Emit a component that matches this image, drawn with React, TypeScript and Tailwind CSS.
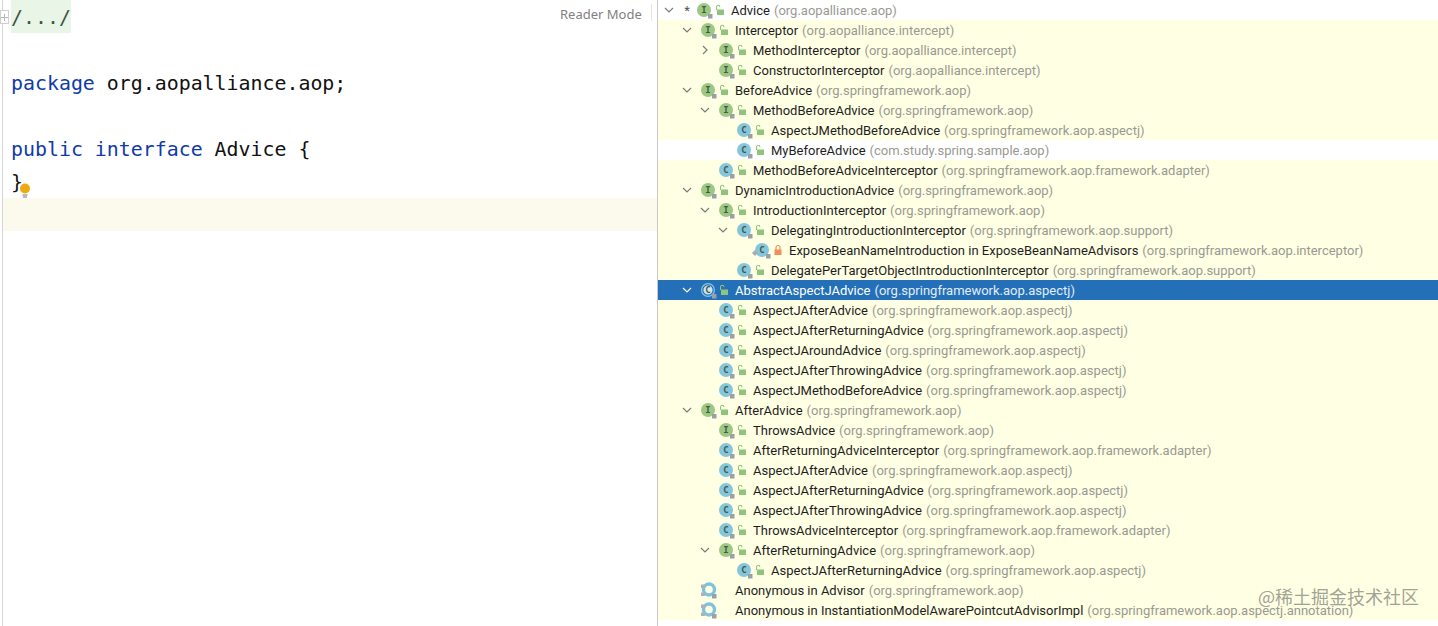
type Kind = "I" | "C" | "A" | "N";

type Row = {
  depth: number;
  name: string;
  pkg?: string;
  kind: Kind;
  arrow?: "down" | "right";
  lock?: "open" | "private" | "none";
  white?: boolean;
  selected?: boolean;
  star?: boolean;
  pin?: boolean;
};

const SPRING_AOP = "(org.springframework.aop)";
const ASPECTJ = "(org.springframework.aop.aspectj)";
const ADAPTER = "(org.springframework.aop.framework.adapter)";
const INTERCEPT = "(org.aopalliance.intercept)";

const rows: Row[] = [
  { depth: 0, name: "Advice", pkg: "(org.aopalliance.aop)", kind: "I", arrow: "down", star: true, white: true },
  { depth: 1, name: "Interceptor", pkg: INTERCEPT, kind: "I", arrow: "down" },
  { depth: 2, name: "MethodInterceptor", pkg: INTERCEPT, kind: "I", arrow: "right" },
  { depth: 2, name: "ConstructorInterceptor", pkg: INTERCEPT, kind: "I" },
  { depth: 1, name: "BeforeAdvice", pkg: SPRING_AOP, kind: "I", arrow: "down" },
  { depth: 2, name: "MethodBeforeAdvice", pkg: SPRING_AOP, kind: "I", arrow: "down" },
  { depth: 3, name: "AspectJMethodBeforeAdvice", pkg: ASPECTJ, kind: "C" },
  { depth: 3, name: "MyBeforeAdvice", pkg: "(com.study.spring.sample.aop)", kind: "C", white: true },
  { depth: 2, name: "MethodBeforeAdviceInterceptor", pkg: ADAPTER, kind: "C" },
  { depth: 1, name: "DynamicIntroductionAdvice", pkg: SPRING_AOP, kind: "I", arrow: "down" },
  { depth: 2, name: "IntroductionInterceptor", pkg: SPRING_AOP, kind: "I", arrow: "down" },
  { depth: 3, name: "DelegatingIntroductionInterceptor", pkg: "(org.springframework.aop.support)", kind: "C", arrow: "down" },
  { depth: 4, name: "ExposeBeanNameIntroduction in ExposeBeanNameAdvisors", pkg: "(org.springframework.aop.interceptor)", kind: "C", lock: "private", pin: true },
  { depth: 3, name: "DelegatePerTargetObjectIntroductionInterceptor", pkg: "(org.springframework.aop.support)", kind: "C" },
  { depth: 1, name: "AbstractAspectJAdvice", pkg: ASPECTJ, kind: "A", arrow: "down", selected: true },
  { depth: 2, name: "AspectJAfterAdvice", pkg: ASPECTJ, kind: "C" },
  { depth: 2, name: "AspectJAfterReturningAdvice", pkg: ASPECTJ, kind: "C" },
  { depth: 2, name: "AspectJAroundAdvice", pkg: ASPECTJ, kind: "C" },
  { depth: 2, name: "AspectJAfterThrowingAdvice", pkg: ASPECTJ, kind: "C" },
  { depth: 2, name: "AspectJMethodBeforeAdvice", pkg: ASPECTJ, kind: "C" },
  { depth: 1, name: "AfterAdvice", pkg: SPRING_AOP, kind: "I", arrow: "down" },
  { depth: 2, name: "ThrowsAdvice", pkg: SPRING_AOP, kind: "I" },
  { depth: 2, name: "AfterReturningAdviceInterceptor", pkg: ADAPTER, kind: "C" },
  { depth: 2, name: "AspectJAfterAdvice", pkg: ASPECTJ, kind: "C" },
  { depth: 2, name: "AspectJAfterReturningAdvice", pkg: ASPECTJ, kind: "C" },
  { depth: 2, name: "AspectJAfterThrowingAdvice", pkg: ASPECTJ, kind: "C" },
  { depth: 2, name: "ThrowsAdviceInterceptor", pkg: ADAPTER, kind: "C" },
  { depth: 2, name: "AfterReturningAdvice", pkg: SPRING_AOP, kind: "I", arrow: "down" },
  { depth: 3, name: "AspectJAfterReturningAdvice", pkg: ASPECTJ, kind: "C" },
  { depth: 1, name: "Anonymous in Advisor", pkg: SPRING_AOP, kind: "N", lock: "none" },
  { depth: 1, name: "Anonymous in InstantiationModelAwarePointcutAdvisorImpl", pkg: "(org.springframework.aop.aspectj.annotation)", kind: "N", lock: "none" },
];

const depthPad = ["pl-[3px]", "pl-[21px]", "pl-[39px]", "pl-[57px]", "pl-[75px]"];

function Arrow({ dir, light }: { dir?: "down" | "right"; light?: boolean }) {
  return (
    <span className="flex w-4 shrink-0 justify-center">
      {dir && (
        <svg width="10" height="10" viewBox="0 0 10 10" fill="none" stroke={light ? "#ffffff" : "#7c7c7c"} strokeWidth="1.2">
          {dir === "down" ? <path d="M1 3l4 4 4-4" /> : <path d="M3 1l4 4-4 4" />}
        </svg>
      )}
    </span>
  );
}

function NodeIcon({ kind, pin }: { kind: Kind; pin?: boolean }) {
  const fill = kind === "I" ? "#9dc883" : "#85c6dc";
  return (
    <svg width="18" height="18" viewBox="0 0 18 18" className="-mr-1 shrink-0 overflow-visible">
      {kind === "N" ? (
        <>
          <circle cx="8" cy="8.5" r="5.5" fill="none" stroke="#7fc2d9" strokeWidth="3.4" />
          <path d="M0 3.5h4v3.5H0zM0 11.5h4v3.5H0z" fill="#a9b4ba" />
        </>
      ) : (
        <circle cx="7" cy="9" r="7" fill={fill} />
      )}
      {kind === "A" && <circle cx="7" cy="9" r="5.2" fill="#cfe6ee" stroke="#2470b8" strokeWidth="1.2" />}
      {kind !== "N" && (
        <text x="7" y="12" textAnchor="middle" fontFamily="'DejaVu Sans Mono', monospace" fontWeight="700" fontSize="9" fill="#3f5a48">
          {kind === "I" ? "I" : "C"}
        </text>
      )}
      {pin && <path d="M-3 12l3-3 3 3-3 3z" fill="#a5adb3" />}
      <rect x="11" y="13" width="4.5" height="4.5" fill="#9aa0a8" />
    </svg>
  );
}

function LockIcon({ type }: { type: "open" | "private" }) {
  if (type === "private") {
    return (
      <svg width="10" height="12" viewBox="0 0 10 12" className="ml-1 shrink-0">
        <path d="M3 6V3.5a2 2 0 014 0V6" fill="none" stroke="#ef8f5c" strokeWidth="1.2" />
        <rect x="1.5" y="5.5" width="7" height="5.5" fill="#ef8f5c" />
      </svg>
    );
  }
  return (
    <svg width="10" height="12" viewBox="0 0 10 12" className="ml-1 shrink-0">
      <path d="M1.5 6V3a1.7 1.7 0 013.4 0" fill="none" stroke="#8fc47c" strokeWidth="1.1" />
      <rect x="2" y="5.5" width="7" height="5.5" fill="#8fc47c" />
    </svg>
  );
}

function TreeRow({ row }: { row: Row }) {
  const bg = row.selected ? "bg-[#2470b8]" : row.white ? "bg-white" : "";
  return (
    <div className={`flex h-5 items-center ${depthPad[row.depth]} ${bg}`}>
      <Arrow dir={row.arrow} light={row.selected} />
      {row.star ? (
        <span className="w-5 shrink-0 text-center text-[13px] leading-none text-[#555]">*</span>
      ) : (
        <span className="w-1.5 shrink-0" />
      )}
      <NodeIcon kind={row.kind} pin={row.pin} />
      {row.lock === "none" ? <span className="ml-1 w-2.5 shrink-0" /> : <LockIcon type={row.lock ?? "open"} />}
      <span className={`ml-1.5 mt-0.5 whitespace-nowrap ${row.selected ? "text-white" : "text-[#1e1e1e]"}`}>{row.name}</span>
      {row.pkg && <span className={`ml-1 mt-0.5 whitespace-nowrap ${row.selected ? "text-[#e3edf7]" : "text-[#9a9a92]"}`}>{row.pkg}</span>}
    </div>
  );
}

function CodeLine({ children }: { children?: React.ReactNode }) {
  return <div className="h-[33px] whitespace-pre pl-[11px] pt-px leading-[33px]">{children}</div>;
}

function Keyword({ children }: { children: string }) {
  return <span className="text-[#0f3ba8]">{children}</span>;
}

export default function App() {
  return (
    <div className="relative flex h-[626px] w-[1438px] overflow-hidden bg-white">
      <div className="relative w-[657px] shrink-0 font-['DejaVu_Sans_Mono',monospace] text-[19.9px] text-[#111]">
        <div className="absolute bottom-0 left-[2px] top-0 w-px bg-[#d4d4d4]" />
        <div className="absolute left-0 top-[10px] flex h-[14px] w-[9px] items-center justify-center border border-[#d0d0d0] bg-white">
          <svg width="7" height="7" viewBox="0 0 7 7" stroke="#b5b5b5" strokeWidth="1">
            <path d="M0 3.5h7M3.5 0v7" />
          </svg>
        </div>
        <div className="h-[33px] pl-[11px]">
          <div className="h-[33px] w-fit whitespace-pre bg-[#e9f5e6] leading-[35px] text-[#3c5646]">/.../</div>
        </div>
        <CodeLine />
        <CodeLine>
          <Keyword>package</Keyword> org.aopalliance.aop;
        </CodeLine>
        <CodeLine />
        <CodeLine>
          <Keyword>public</Keyword> <Keyword>interface</Keyword> Advice {"{"}
        </CodeLine>
        <CodeLine>{"}"}</CodeLine>
        <div className="ml-[3px] h-[33px] bg-[#fcfaed]" />
        <svg width="12" height="16" viewBox="0 0 12 16" className="absolute left-[19px] top-[183px]">
          <circle cx="6" cy="5.5" r="5" fill="#eeaa11" />
          <path d="M3.5 12h5M4 14h4" stroke="#777" strokeWidth="1" />
        </svg>
        <span className="absolute left-[560px] top-[5px] font-['Noto_Sans',sans-serif] text-[13px] leading-[18px] text-[#7f7f7f]">Reader Mode</span>
        <div className="absolute left-[651px] top-[4px] h-[17px] w-px bg-[#e4e4e4]" />
      </div>
      <div className="flex-1 border-l border-[#c9c9c9] font-['Roboto',sans-serif] text-[13px] leading-5">
        <div className="bg-[#ffffe4]">
          {rows.map((row, i) => (
            <TreeRow key={i} row={row} />
          ))}
        </div>
      </div>
      <span className="absolute left-[1258px] top-[584px] font-['Noto_Sans_CJK_SC',sans-serif] text-[18px] leading-6 text-[#8a8a80]/80">@稀土掘金技术社区</span>
    </div>
  );
}
